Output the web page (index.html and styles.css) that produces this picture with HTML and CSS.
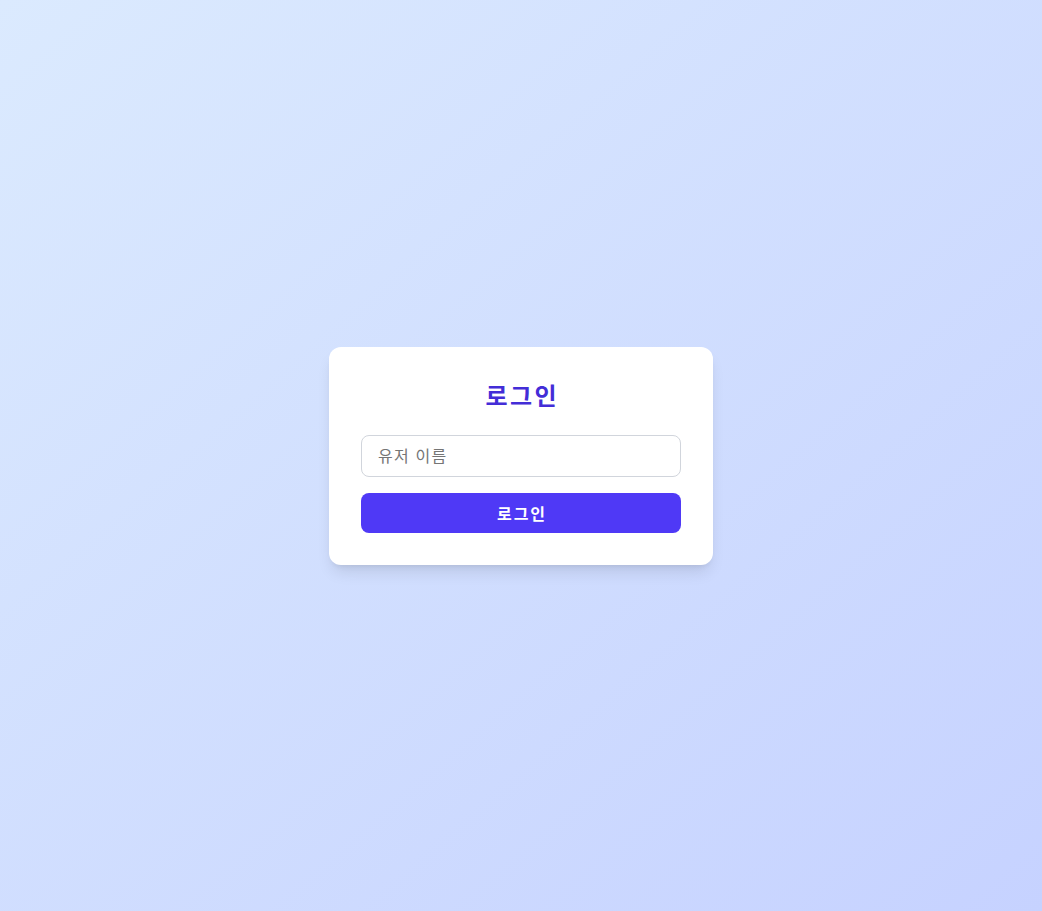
FILE: index.html
```html
<!DOCTYPE html>
<html lang="ko">
<head>
<meta charset="utf-8">
<title>로그인</title>
<link rel="stylesheet" href="styles.css">
</head>
<body>
<main class="page">
  <form class="card">
    <h1 class="title">로그인</h1>
    <input class="field" type="text" placeholder="유저 이름">
    <button class="btn" type="button">로그인</button>
  </form>
</main>
</body>
</html>
```
FILE: styles.css
```css
* { box-sizing: border-box; }
html, body { margin: 0; height: 100%; }
body {
  font-family: "Noto Sans CJK KR", "Noto Sans", sans-serif;
}
.page {
  min-height: 100vh;
  display: flex;
  align-items: center;
  justify-content: center;
  background: linear-gradient(to bottom right, #dbeafe, #c6d2ff);
}
.card {
  width: 384px;
  background: #fff;
  border-radius: 12px;
  padding: 32px;
  display: flex;
  flex-direction: column;
  box-shadow: 0 10px 15px -3px rgba(0,0,0,0.1), 0 4px 6px -4px rgba(0,0,0,0.1);
}
.title {
  margin: 0 0 24px;
  text-align: center;
  font-size: 24px;
  line-height: 32px;
  font-weight: 700;
  color: #432dd7;
  letter-spacing: 2.5px;
  text-indent: 2.5px;
}
.field {
  height: 42px;
  border: 1px solid #d1d5dc;
  border-radius: 8px;
  padding: 7px 16px 9px;
  font-family: inherit;
  font-size: 16px;
  line-height: 24px;
  letter-spacing: 1.2px;
  outline: none;
}
.field::placeholder { color: #757575; }
.btn {
  margin-top: 16px;
  height: 40px;
  border: 0;
  border-radius: 8px;
  background: #4f39f6;
  color: #fff;
  font-family: inherit;
  font-size: 16px;
  font-weight: 700;
  letter-spacing: 2px;
  text-indent: 2px;
  cursor: pointer;
}
```
